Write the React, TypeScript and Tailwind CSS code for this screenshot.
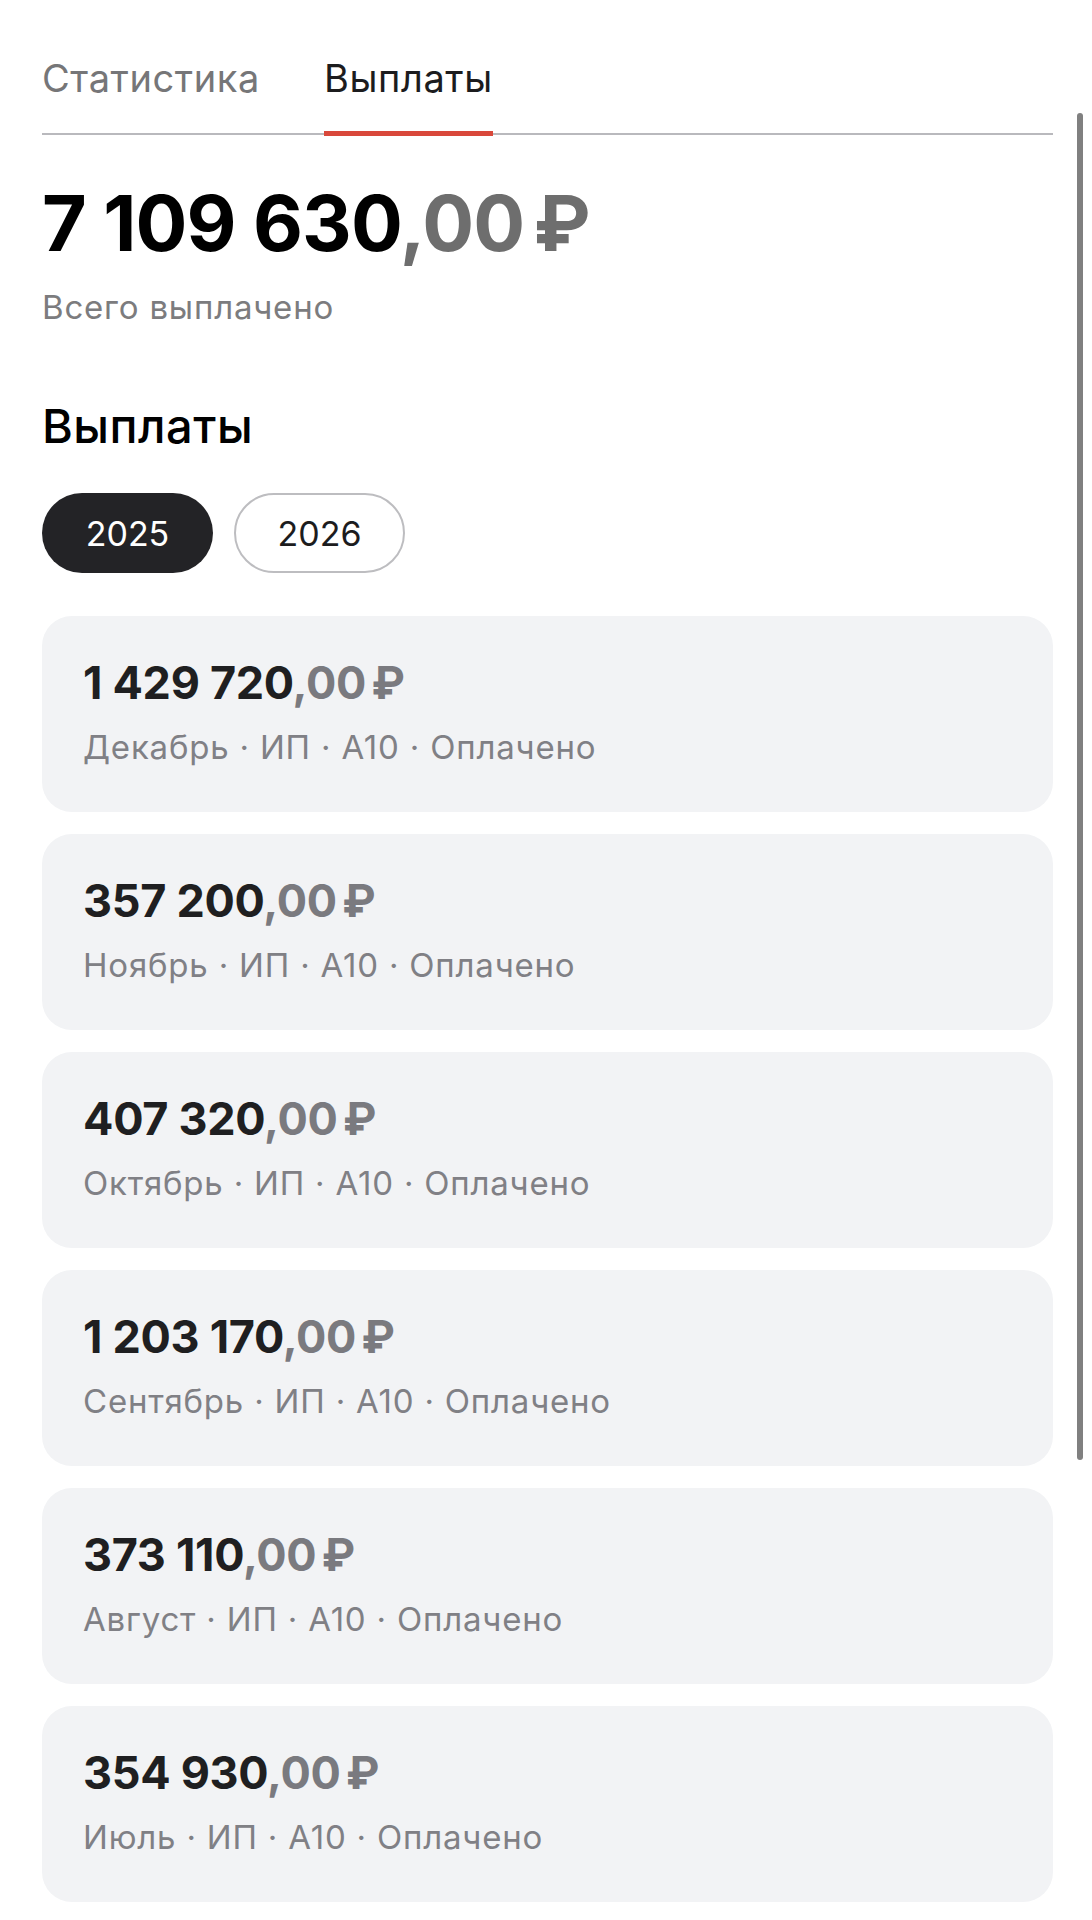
import { useState } from 'react';

type Payout = {
  whole: string;
  month: string;
};

const payouts: Payout[] = [
  { whole: '1 429 720', month: 'Декабрь' },
  { whole: '357 200', month: 'Ноябрь' },
  { whole: '407 320', month: 'Октябрь' },
  { whole: '1 203 170', month: 'Сентябрь' },
  { whole: '373 110', month: 'Август' },
  { whole: '354 930', month: 'Июль' },
];

function PayoutCard({ p }: { p: Payout }) {
  return (
    <div className="h-[196px] rounded-[30px] bg-[#f2f3f5] pl-[41px] pt-[41px]">
      <div className="text-[45px] leading-[52px] font-bold tracking-[-0.3px] text-[#1f1f21]">
        {p.whole}
        <span className="text-[#7a7a7f]">,00</span>
        <span className="ml-[0.12em] text-[#7a7a7f]">₽</span>
      </div>
      <div className="mt-[18px] text-[33px] leading-[40px] tracking-[0.8px] text-[#808085]">
        {p.month} · ИП · А10 · Оплачено
      </div>
    </div>
  );
}

export default function App() {
  const [tab, setTab] = useState<'stats' | 'payouts'>('payouts');
  const [year, setYear] = useState(2025);

  return (
    <div
      className="relative min-h-[1920px] w-full overflow-hidden bg-white pl-[42px] pr-[39px]"
      style={{ fontFamily: 'Inter, "Noto Sans", sans-serif' }}
    >
      {/* Tabs */}
      <div className="flex gap-[64px] border-b-2 border-[#b9b9bd]">
        <button
          onClick={() => setTab('stats')}
          className={`-mb-[3px] border-b-[5px] pt-[54px] pb-[29px] text-[38px] leading-[48px] tracking-[0.6px] ${
            tab === 'stats' ? 'border-[#d9483b] text-[#1c1c1e]' : 'border-transparent text-[#767678]'
          }`}
        >
          Статистика
        </button>
        <button
          onClick={() => setTab('payouts')}
          className={`-mb-[3px] border-b-[5px] pt-[54px] pb-[29px] text-[38px] leading-[48px] tracking-[0.6px] ${
            tab === 'payouts' ? 'border-[#d9483b] text-[#1c1c1e]' : 'border-transparent text-[#767678]'
          }`}
        >
          Выплаты
        </button>
      </div>

      {/* Total */}
      <div className="mt-[49px] text-[77px] leading-[78px] font-bold tracking-[-0.9px] text-black">
        7 109 630<span className="text-[#6e6e6e]">,00</span>
        <span className="ml-[0.12em] text-[#6e6e6e]">₽</span>
      </div>
      <div className="mt-[27px] text-[33px] leading-[36px] tracking-[0.8px] text-[#7c7c7e]">Всего выплачено</div>

      <h2 className="mt-[75px] text-[47px] leading-[52px] font-medium tracking-[0.5px] text-black">Выплаты</h2>

      {/* Year pills */}
      <div className="mt-[41px] flex gap-[21px]">
        {[2025, 2026].map(y => (
          <button
            key={y}
            onClick={() => setYear(y)}
            className={`flex h-[80px] w-[171px] items-center justify-center rounded-full text-[34px] ${
              year === y
                ? 'bg-[#232326] text-white'
                : 'border-2 border-[#bdbdc0] bg-white text-[#1c1c1e]'
            }`}
          >
            {y}
          </button>
        ))}
      </div>

      {/* Payout cards */}
      <div className="mt-[43px] flex flex-col gap-[22px]">
        {payouts.map(p => (
          <PayoutCard key={p.month} p={p} />
        ))}
      </div>

      {/* Scroll indicator */}
      <div className="absolute left-[1077px] top-[113px] h-[1347px] w-[6px] rounded-full bg-[#808080]" />
    </div>
  );
}
